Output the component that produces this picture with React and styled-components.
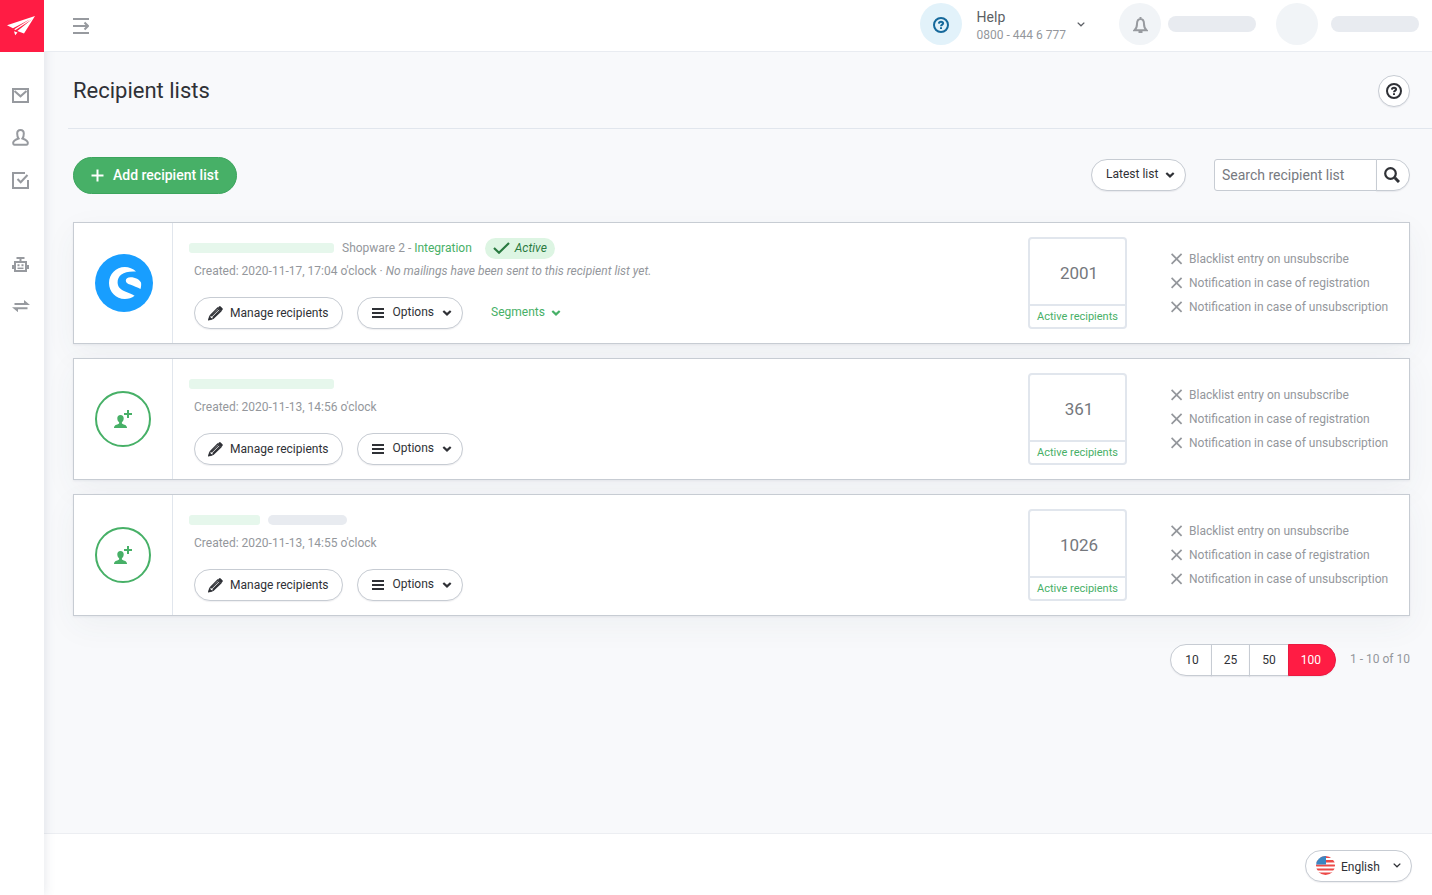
import React from "react";
import styled, { createGlobalStyle, css } from "styled-components";

const c = {
  red: "#ff1c44",
  green: "#47b067",
  text: "#2f3136",
  grey: "#94979c",
  icon: "#979a9f",
  line: "#c7ccd3",
  soft: "#e1e6ed",
  page: "#f8f9fb",
};

const GlobalStyle = createGlobalStyle`
  *, *::before, *::after { box-sizing: border-box; }
  body {
    margin: 0;
    background: ${c.page};
    color: ${c.text};
    font: 400 12px/16px Roboto, "Liberation Sans", sans-serif;
  }
  button, input, select { font: inherit; color: inherit; margin: 0; }
  button, select { cursor: pointer; }
  a { color: inherit; text-decoration: none; }
  svg { display: block; flex: none; }
`;

const Shell = styled.div`
  display: flex;
  min-height: 100vh;
`;

const Sidebar = styled.aside`
  flex: none;
  width: 44px;
  background: #fff;
  box-shadow: 1px 0 10px rgba(60, 80, 110, 0.13);
  z-index: 1;
`;

const Logo = styled.a`
  display: flex;
  align-items: center;
  justify-content: center;
  height: 52px;
  padding-right: 2px;
  background: ${c.red};
`;

const Nav = styled.nav`
  display: flex;
  flex-direction: column;
  padding: 23px 3px 0 0;
`;

const NavLink = styled.a`
  display: flex;
  align-items: center;
  justify-content: center;
  height: 42px;
  margin-top: ${(p) => (p.$apart ? "42px" : "0")};
  color: ${c.icon};
`;

const Column = styled.div`
  flex: 1;
  min-width: 0;
  display: flex;
  flex-direction: column;
`;

const Header = styled.header`
  display: flex;
  align-items: center;
  height: 52px;
  padding: 0 13px 3px 29px;
  background: #fff;
  border-bottom: 1px solid #e9ecf1;
  z-index: 2;
`;

const PlainButton = styled.button`
  display: flex;
  align-items: center;
  padding: 0;
  border: 0;
  background: none;
  text-align: left;
`;

const MenuToggle = styled(PlainButton)`
  margin-right: auto;
  padding-top: 4px;
  color: ${c.icon};
`;

const HelpButton = styled(PlainButton)`
  color: #5c5f65;
`;

const Disc = styled.span`
  display: flex;
  align-items: center;
  justify-content: center;
  width: 42px;
  height: 42px;
  padding-top: 2px;
  border-radius: 50%;
  background: ${(p) => (p.$blue ? "#e2f2fa" : "#f1f4f7")};
  color: ${(p) => (p.$blue ? "#16699b" : c.icon)};
`;

const HelpText = styled.span`
  margin: 3px 11px 0 15px;
  color: ${c.grey};
`;

const HelpTitle = styled.span`
  display: block;
  margin-bottom: 2px;
  font-size: 14px;
  color: #5c5f65;
`;

const Account = styled(PlainButton)`
  gap: ${(p) => p.$gap};
  margin-left: ${(p) => p.$before};
`;

const Bar = styled.span`
  flex: none;
  width: ${(p) => p.$width};
  height: ${(p) => (p.$tall ? "16px" : "10px")};
  border-radius: ${(p) => (p.$tall ? "8px" : p.$green ? "3px" : "5px")};
  background: ${(p) => (p.$green ? "#e6f7ec" : "#e8ebf0")};
`;

const TitleRow = styled.div`
  display: flex;
  align-items: center;
  justify-content: space-between;
  height: 77px;
  margin-left: 24px;
  padding: 2px 22px 0 5px;
  border-bottom: 1px solid ${c.soft};
`;

const Title = styled.h1`
  margin: 0;
  font-size: 22px;
  line-height: 28px;
  font-weight: 400;
`;

const outlined = css`
  border: 1px solid ${c.line};
  background: #fff;
  box-shadow: 0 1px 1px rgba(60, 70, 90, 0.08);
`;

const RoundButton = styled.button`
  ${outlined}
  display: flex;
  align-items: center;
  justify-content: center;
  width: 32px;
  height: 32px;
  padding: 0;
  border-radius: 50%;
`;

const Content = styled.main`
  flex: 1;
  padding: 28px 22px 28px 29px;
`;

const Toolbar = styled.div`
  display: flex;
  align-items: center;
  justify-content: space-between;
  margin-bottom: 28px;
`;

const Filters = styled.div`
  display: flex;
  gap: 28px;
  padding-bottom: 1px;
`;

const AddButton = styled.button`
  display: flex;
  align-items: center;
  gap: 9px;
  height: 37px;
  padding: 0 17px 1px;
  border: 1px solid #3ca55d;
  border-radius: 19px;
  background: ${c.green};
  color: #fff;
  font-size: 14px;
  font-weight: 500;
`;

const SelectWrap = styled.span`
  ${outlined}
  display: grid;
  align-items: center;
  height: 32px;
  border-radius: 16px;

  & > * { grid-area: 1 / 1; }
  & > svg { pointer-events: none; }
  & > svg:first-child { margin-left: 10px; }
  & > svg:last-child { justify-self: end; margin-right: 10px; }
`;

const Select = styled.select`
  appearance: none;
  width: ${(p) => p.$width};
  height: 30px;
  padding: ${(p) => p.$pad};
  border: 0;
  border-radius: 16px;
  background: none;
`;

const Search = styled.form`
  display: flex;
  height: 32px;
`;

const SearchInput = styled.input`
  width: 163px;
  padding: 0 7px;
  border: 1px solid ${c.line};
  border-radius: 3px 0 0 3px;
  background: #fff;
  font-size: 14px;

  &::placeholder { color: #777a7f; opacity: 1; }
`;

const SearchButton = styled.button`
  ${outlined}
  display: flex;
  align-items: center;
  justify-content: center;
  width: 34px;
  margin-left: -1px;
  padding: 0 3px 0 0;
  border-radius: 0 16px 16px 0;
`;

const Cards = styled.div`
  display: flex;
  flex-direction: column;
  gap: 14px;
`;

const Card = styled.article`
  display: flex;
  align-items: stretch;
  border: 1px solid ${c.line};
  background: #fff;
  box-shadow: 0 10px 30px rgba(60, 80, 100, 0.05), 0 1px 2px rgba(60, 80, 100, 0.08);
`;

const CardIcon = styled.div`
  flex: none;
  display: flex;
  align-items: center;
  width: 99px;
  padding-left: 21px;
  border-right: 1px solid ${c.soft};
`;

const Ring = styled.span`
  display: flex;
  align-items: center;
  justify-content: center;
  width: 56px;
  height: 56px;
  border: 2px solid ${c.green};
  border-radius: 50%;
  color: ${c.green};
`;

const CardBody = styled.div`
  flex: 1;
  min-width: 0;
  padding: 14px 16px;
`;

const NameRow = styled.div`
  display: flex;
  align-items: center;
  gap: 8px;
  height: 22px;
  color: ${c.grey};
`;

const GreenLink = styled.a`
  color: ${c.green};
`;

const Badge = styled.span`
  display: flex;
  align-items: center;
  gap: 5px;
  height: 21px;
  margin-left: 5px;
  padding: 0 8px;
  border-radius: 11px;
  background: #ddf5e3;
  color: #2a7a41;
  font-style: italic;
`;

const Created = styled.p`
  margin: 2px 0 16px 5px;
  line-height: 20px;
  color: ${c.grey};
`;

const Actions = styled.div`
  display: flex;
  align-items: center;
  gap: 14px;
  margin-left: 5px;
`;

const PillButton = styled.button`
  ${outlined}
  display: flex;
  align-items: center;
  gap: ${(p) => (p.$menu ? "8px" : "7px")};
  height: 32px;
  padding: 0 ${(p) => (p.$menu ? "10px" : "13px")} 0 13px;
  border-radius: 16px;
`;

const MenuLabel = styled.span`
  padding-bottom: 2px;
`;

const SegmentsButton = styled(PlainButton)`
  gap: 6px;
  margin-left: 14px;
  color: ${c.green};
`;

const Count = styled.div`
  flex: none;
  align-self: center;
  display: flex;
  flex-direction: column;
  width: 99px;
  height: 92px;
  border: 2px solid ${c.soft};
  border-radius: 4px;
  text-align: center;
`;

const CountValue = styled.strong`
  flex: 1;
  padding: 3px 0 0 3px;
  border-bottom: 2px solid ${c.soft};
  color: #75787d;
  font-size: 17px;
  line-height: 62px;
  font-weight: 400;
`;

const CountLabel = styled.span`
  color: ${c.green};
  font-size: 11px;
  line-height: 22px;
`;

const Flags = styled.ul`
  flex: none;
  width: 238px;
  margin: 0 0 0 44px;
  padding: 24px 0 0;
  list-style: none;
  color: ${c.grey};
`;

const Flag = styled.li`
  display: flex;
  align-items: center;
  gap: 6px;
  height: 24px;
`;

const Pager = styled.div`
  display: flex;
  justify-content: flex-end;
  align-items: center;
  gap: 14px;
  margin-top: 28px;
  color: ${c.grey};
`;

const Range = styled.span`
  padding-bottom: 2px;
`;

const Sizes = styled.div`
  display: flex;
`;

const SizeButton = styled.button`
  ${outlined}
  height: 32px;
  padding: 0 12px;
  color: ${c.text};

  & + & { margin-left: -1px; }
  &:first-child { padding-left: 14px; border-radius: 16px 0 0 16px; }
  &:last-child { padding-right: 14px; border-radius: 0 16px 16px 0; }
  ${(p) =>
    p.$active &&
    css`
      border-color: #ea1a40;
      background: ${c.red};
      color: #fff;
    `}
`;

const Footer = styled.footer`
  display: flex;
  align-items: center;
  justify-content: flex-end;
  height: 62px;
  padding: 2px 20px 0;
  border-top: 1px solid #eceef2;
  background: #fff;
`;

const Svg = ({ w = 16, h = w, box, children, ...rest }) => (
  <svg width={w} height={h} viewBox={box || `0 0 ${w} ${h}`} fill="none" stroke="currentColor" aria-hidden="true" {...rest}>
    {children}
  </svg>
);

const PlaneIcon = () => (
  <Svg w={28} h={20} stroke="none">
    <path fill="#fff" d="M28 0 0 9.200l6 3L23.500 3 7.200 13.300l1.300.8L25 3.200 10.300 15 17 17.500ZM7 15.200l1.200 4 2.300-2.600Z" />
  </Svg>
);
const ToggleIcon = () => (
  <Svg strokeWidth="2">
    <path d="M0 1h16M0 15h16M0 8h14M11.500 4.500 15 8l-3.500 3.500" />
  </Svg>
);
const MailIcon = () => (
  <Svg w={17} h={16} strokeWidth="2">
    <path d="M1 1h15v13H1ZM2.500 3l6 5.300 6-5.300" />
  </Svg>
);
const PersonIcon = () => (
  <Svg w={17} h={18} strokeWidth="2">
    <path d="M8.500 1C6 1 5.200 2.300 5.200 4.600c0 2.200.3 3.700 1.300 4.900C4 10.500 1.500 11.300 1.200 13.700c0 1.500.3 2 1.300 2h12c1 0 1.300-.5 1.300-2-.3-2.400-2.800-3.200-5.300-4.200 1-1.200 1.300-2.700 1.300-4.900C11.800 2.300 11 1 8.500 1Z" />
  </Svg>
);
const TaskIcon = () => (
  <Svg w={17} h={17} strokeWidth="2">
    <path d="M13 1H1v15h15V8M5.500 7l3.200 3.300L15.500 3" />
  </Svg>
);
const RobotIcon = () => (
  <Svg w={17} h={15} strokeWidth="2">
    <path d="M3 5h11v9H3ZM4.500 1h8M8.500 1v3" />
    <path d="M1 8v4M16 8v4M5.500 8.200h2M9.500 8.200h2" />
    <path strokeWidth="1.500" d="M5.500 11.300h6" />
  </Svg>
);
const SwapIcon = () => (
  <Svg w={18} h={12} stroke="none" fill="currentColor">
    <path d="M2.500 3H12V0l6 5H2.500ZM15.500 7.200v2H6v3L0 7.200Z" />
  </Svg>
);
const HelpIcon = () => (
  <Svg strokeWidth="2">
    <circle cx="8" cy="8" r="7" />
    <path d="M5.900 6.600C6 5.300 6.800 4.700 8 4.700s2.100.6 2.100 1.700S8 7.700 8 9.200M8 10.300v1.600" />
  </Svg>
);
const BellIcon = () => (
  <Svg w={15} h={17} strokeWidth="2">
    <path d="M7.500 2C4.700 2 4 4.500 4 7c0 3-.6 4.500-2.500 6.200h12C11.600 11.500 11 10 11 7c0-2.500-.7-5-3.500-5ZM7.500 0v2" />
    <path d="M5.500 15h4" />
  </Svg>
);
const ThinChevron = () => (
  <Svg w={8} h={5} strokeWidth="1.300">
    <path d="m.7.600 3.300 3.200L7.300.6" />
  </Svg>
);
const Chevron = () => (
  <Svg w={10} h={6} strokeWidth="2.200">
    <path d="M1.300 1 5 4.400 8.700 1" />
  </Svg>
);
const PlusIcon = () => (
  <Svg w={13} strokeWidth="2">
    <path d="M6.500 .5v12M.5 6.500h12" />
  </Svg>
);
const SearchIcon = () => (
  <Svg w={16} strokeWidth="2.200">
    <circle cx="6.500" cy="6.500" r="5.300" />
    <path strokeWidth="3" d="m10.800 10.800 4.200 4.200" />
  </Svg>
);
const PencilIcon = () => (
  <Svg w={15} strokeWidth="1.200">
    <path d="M1 13.500l1.200-4L9.500 2l3.300 3.300L5.200 12.500ZM3.300 10.300l7.300-7.200M4.600 11.600l7.200-7.200" />
    <path fill="currentColor" strokeWidth=".5" d="m10 1.700 1.200-1.200h1.200l2 2v1.200l-1.200 1.200ZM.4 14.200l1-3.800 2.800 2.800Z" />
  </Svg>
);
const MenuIcon = () => (
  <Svg w={14} h={10} strokeWidth="2">
    <path d="M1 1h12M1 5h12M1 9h12" />
  </Svg>
);
const CheckIcon = () => (
  <Svg w={17} h={12} strokeWidth="2.200">
    <path d="m1 6 5 4.700L16 1" />
  </Svg>
);
const CrossIcon = () => (
  <Svg w={12} strokeWidth="1.700">
    <path d="m.6 .8 10 10M10.600 .8l-10 10" />
  </Svg>
);
const AddPersonIcon = () => (
  <Svg w={18} h={18} stroke="none" fill="currentColor">
    <path d="M6.500 5C4.300 5 3.300 6.300 3.300 8.300c0 2 .7 3.200 1.800 4v1.300C4.500 14.600.4 14.500 0 17.500v.5h13v-.5c-.4-3-4.500-2.900-5.100-3.900v-1.300c1.100-.8 1.800-2 1.800-4C9.700 6.300 8.700 5 6.500 5ZM13 0h2v3h3v2h-3v3h-2V5h-3V3h3Z" />
  </Svg>
);
const ShopwareIcon = () => (
  <Svg w={58} stroke="none">
    <circle cx="29" cy="29" r="29" fill="#189eff" />
    <path fill="#fff" d="M41 17.600C38 14.600 34 13 29.800 13 21 13 14 20.200 14 29s7 16 15.800 16c3.500 0 7-1.200 9.800-3.300-3-2-6-3-9.500-4.300-4.300-1.700-7.500-4.500-7.500-9 0-7 6-11.600 18.400-10.800Z" />
    <path fill="#fff" d="M45.500 35c.6-2 .9-4.600.5-6.600-1.500-2.900-5.500-5.200-10.500-5.200-3 0-4.700 1.400-4.700 3.200 0 2.200 1.800 3.100 4.200 4.200 3.500 1.500 7.500 2.700 10.500 4.400Z" />
  </Svg>
);
const FlagIcon = () => (
  <Svg w={19} stroke="none">
    <clipPath id="flag-round"><circle cx="9.500" cy="9.500" r="9.500" /></clipPath>
    <g clipPath="url(#flag-round)">
      <path fill="#fff" d="M0 0h19v19H0Z" />
      <path fill="#ec4a48" d="M0 0h19v2H0ZM0 4h19v2.500H0ZM0 8.500h19v2H0ZM0 12.500h19v2H0ZM0 16.500h19V19H0Z" />
      <path fill="#3c86c2" d="M0 0h10v8.500H0Z" />
    </g>
  </Svg>
);

const NAV = [
  { label: "Mailings", Icon: MailIcon },
  { label: "Recipients", Icon: PersonIcon },
  { label: "Forms", Icon: TaskIcon },
  { label: "Automation", Icon: RobotIcon, apart: true },
  { label: "Integrations", Icon: SwapIcon },
];

const LISTS = [
  { id: 1, count: 2001, created: "2020-11-17, 17:04", shop: true, bars: [{ width: "145px", green: true }] },
  { id: 2, count: 361, created: "2020-11-13, 14:56", bars: [{ width: "145px", green: true }] },
  { id: 3, count: 1026, created: "2020-11-13, 14:55", bars: [{ width: "71px", green: true }, { width: "79px" }] },
];

const FLAGS = [
  "Blacklist entry on unsubscribe",
  "Notification in case of registration",
  "Notification in case of unsubscription",
];

function ListCard({ list }) {
  return (
    <Card>
      <CardIcon>{list.shop ? <ShopwareIcon /> : <Ring><AddPersonIcon /></Ring>}</CardIcon>
      <CardBody>
        <NameRow>
          {list.bars.map((b) => <Bar key={b.width} $width={b.width} $green={b.green} />)}
          {list.shop && (
            <>
              <span>Shopware 2 - <GreenLink href="#integration">Integration</GreenLink></span>
              <Badge><CheckIcon />Active</Badge>
            </>
          )}
        </NameRow>
        <Created>
          Created: {list.created} o'clock
          {list.shop && <> · <em>No mailings have been sent to this recipient list yet.</em></>}
        </Created>
        <Actions>
          <PillButton type="button"><PencilIcon />Manage recipients</PillButton>
          <PillButton type="button" $menu aria-haspopup="menu"><MenuIcon /><MenuLabel>Options</MenuLabel><Chevron /></PillButton>
          {list.shop && <SegmentsButton type="button" aria-haspopup="menu"><MenuLabel>Segments</MenuLabel><Chevron /></SegmentsButton>}
        </Actions>
      </CardBody>
      <Count>
        <CountValue>{list.count}</CountValue>
        <CountLabel>Active recipients</CountLabel>
      </Count>
      <Flags>
        {FLAGS.map((f) => <Flag key={f}><CrossIcon />{f}</Flag>)}
      </Flags>
    </Card>
  );
}

export default function App() {
  return (
    <>
      <GlobalStyle />
      <Shell>
        <Sidebar>
          <Logo href="#home" aria-label="Home"><PlaneIcon /></Logo>
          <Nav aria-label="Main">
            {NAV.map(({ label, Icon, apart }) => (
              <NavLink key={label} href={`#${label.toLowerCase()}`} aria-label={label} $apart={apart}><Icon /></NavLink>
            ))}
          </Nav>
        </Sidebar>
        <Column>
          <Header>
            <MenuToggle type="button" aria-label="Expand menu"><ToggleIcon /></MenuToggle>
            <HelpButton type="button" aria-haspopup="menu">
              <Disc $blue><HelpIcon /></Disc>
              <HelpText><HelpTitle>Help</HelpTitle>0800 - 444 6 777</HelpText>
              <ThinChevron />
            </HelpButton>
            <Account type="button" aria-label="Notifications" $gap="7px" $before="34px">
              <Disc><BellIcon /></Disc><Bar $tall $width="88px" />
            </Account>
            <Account type="button" aria-label="Account" $gap="13px" $before="20px">
              <Disc /><Bar $tall $width="88px" />
            </Account>
          </Header>
          <TitleRow>
            <Title>Recipient lists</Title>
            <RoundButton type="button" aria-label="Help"><HelpIcon /></RoundButton>
          </TitleRow>
          <Content>
            <Toolbar>
              <AddButton type="button"><PlusIcon />Add recipient list</AddButton>
              <Filters>
                <SelectWrap>
                  <Select aria-label="Sort by" $width="93px" $pad="0 24px 2px 14px" defaultValue="latest">
                    <option value="latest">Latest list</option>
                    <option value="oldest">Oldest list</option>
                  </Select>
                  <Chevron />
                </SelectWrap>
                <Search role="search" onSubmit={(e) => e.preventDefault()}>
                  <SearchInput type="text" aria-label="Search recipient list" placeholder="Search recipient list" />
                  <SearchButton type="submit" aria-label="Search"><SearchIcon /></SearchButton>
                </Search>
              </Filters>
            </Toolbar>
            <Cards>
              {LISTS.map((l) => <ListCard key={l.id} list={l} />)}
            </Cards>
            <Pager>
              <Sizes role="group" aria-label="Entries per page">
                {[10, 25, 50, 100].map((n) => (
                  <SizeButton key={n} type="button" $active={n === 100} aria-pressed={n === 100}>{n}</SizeButton>
                ))}
              </Sizes>
              <Range>1 - 10 of 10</Range>
            </Pager>
          </Content>
          <Footer>
            <SelectWrap>
              <FlagIcon />
              <Select aria-label="Language" $width="105px" $pad="2px 24px 0 35px" defaultValue="en">
                <option value="en">English</option>
                <option value="de">Deutsch</option>
              </Select>
              <ThinChevron />
            </SelectWrap>
          </Footer>
        </Column>
      </Shell>
    </>
  );
}
